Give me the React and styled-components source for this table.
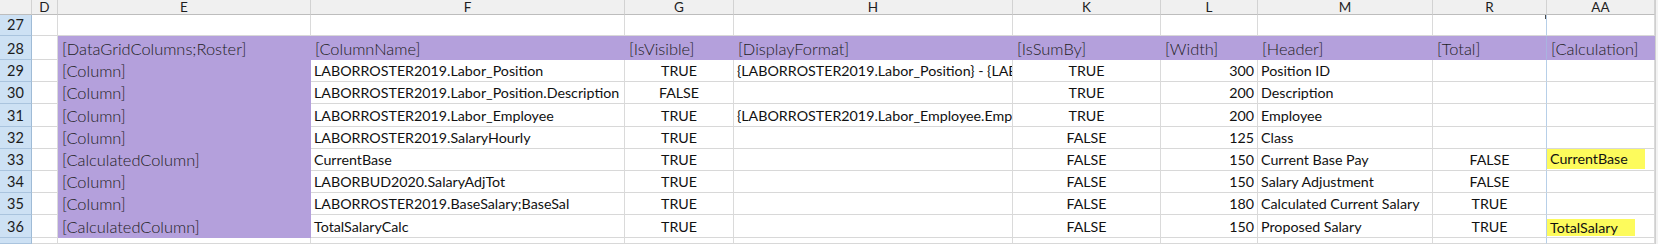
import React from 'react'
import styled, { createGlobalStyle } from 'styled-components'

const GlobalStyle = createGlobalStyle`
  html, body {
    margin: 0;
    padding: 0;
    background: #ffffff;
  }
  body {
    font-family: Lato, "Open Sans", sans-serif;
    overflow: hidden;
  }
`

const columns = [
  { key: 'D', w: 26 },
  { key: 'E', w: 253 },
  { key: 'F', w: 314 },
  { key: 'G', w: 109 },
  { key: 'H', w: 279 },
  { key: 'K', w: 148 },
  { key: 'L', w: 97 },
  { key: 'M', w: 175 },
  { key: 'R', w: 114 },
  { key: 'AA', w: 108 },
]

const header = {
  E: '[DataGridColumns;Roster]',
  F: '[ColumnName]',
  G: '[IsVisible]',
  H: '[DisplayFormat]',
  K: '[IsSumBy]',
  L: '[Width]',
  M: '[Header]',
  R: '[Total]',
  AA: '[Calculation]',
}

// H only shows what fits before column K, as in the sheet
const rows = [
  { n: 29, h: 22, E: '[Column]', F: 'LABORROSTER2019.Labor_Position', G: 'TRUE', H: '{LABORROSTER2019.Labor_Position} - {LAB', K: 'TRUE', L: '300', M: 'Position ID' },
  { n: 30, h: 22, E: '[Column]', F: 'LABORROSTER2019.Labor_Position.Description', G: 'FALSE', K: 'TRUE', L: '200', M: 'Description' },
  { n: 31, h: 23, E: '[Column]', F: 'LABORROSTER2019.Labor_Employee', G: 'TRUE', H: '{LABORROSTER2019.Labor_Employee.Emp', K: 'TRUE', L: '200', M: 'Employee' },
  { n: 32, h: 22, E: '[Column]', F: 'LABORROSTER2019.SalaryHourly', G: 'TRUE', K: 'FALSE', L: '125', M: 'Class' },
  { n: 33, h: 22, E: '[CalculatedColumn]', F: 'CurrentBase', G: 'TRUE', K: 'FALSE', L: '150', M: 'Current Base Pay', R: 'FALSE', AA: 'CurrentBase' },
  { n: 34, h: 22, E: '[Column]', F: 'LABORBUD2020.SalaryAdjTot', G: 'TRUE', K: 'FALSE', L: '150', M: 'Salary Adjustment', R: 'FALSE' },
  { n: 35, h: 22, E: '[Column]', F: 'LABORROSTER2019.BaseSalary;BaseSal', G: 'TRUE', K: 'FALSE', L: '180', M: 'Calculated Current Salary', R: 'TRUE' },
  { n: 36, h: 23, E: '[CalculatedColumn]', F: 'TotalSalaryCalc', G: 'TRUE', K: 'FALSE', L: '150', M: 'Proposed Salary', R: 'TRUE', AA: 'TotalSalary' },
]

const centered = ['G', 'K', 'R']

const Sheet = styled.div`
  display: grid;
  grid-template-columns: 32px ${columns.map(c => c.w + 'px').join(' ')} 1fr;
  grid-template-rows: 15px 21px 24px ${rows.map(r => r.h + 'px').join(' ')} 6px;
  width: 1658px;
  height: 244px;
  overflow: hidden;
`

const Cell = styled.div`
  box-sizing: border-box;
  position: relative;
  display: flex;
  align-items: flex-end;
  justify-content: ${p => (p.$align === 'center' ? 'center' : p.$align === 'right' ? 'flex-end' : 'flex-start')};
  padding: 0 3px 1px 3px;
  background: #ffffff;
  border-right: 1px solid ${p => (p.$sel ? '#b7cfe8' : '#dadada')};
  border-bottom: 1px solid #d8d8d8;
  font-size: 14.25px;
  color: #111111;
  white-space: nowrap;
  overflow: hidden;
  line-height: 18px;
`

const PurpleCell = styled(Cell)`
  background: #b4a0dc;
  border-right-color: ${p => (p.$sel ? '#a9b3e0' : '#b4a0dc')};
  border-bottom-color: #b4a0dc;
  font-size: 16.4px;
  font-weight: 300;
  color: #1e1e1e;
  padding-left: 4px;
  padding-bottom: 1px;
  line-height: 19px;
`

const ColHead = styled.div`
  box-sizing: border-box;
  display: flex;
  align-items: center;
  justify-content: center;
  background: #f0f0f0;
  border-right: 1px solid #d2d2d2;
  border-bottom: 1px solid #bdbdbd;
  font-size: 13.5px;
  color: #1e1e1e;
  line-height: 14px;
`

const RowHead = styled.div`
  box-sizing: border-box;
  display: flex;
  align-items: flex-end;
  justify-content: center;
  padding-bottom: 1px;
  background: #cde1f4;
  border-right: 1px solid #9fbbd6;
  border-bottom: 1px solid #aac4de;
  font-size: 14.5px;
  color: #1c1c1c;
  line-height: 18px;
`

const Filler = styled.div`
  background: #f3f3f3;
  border-left: 1px solid #cfcfcf;
`

const Highlight = styled.span`
  display: inline-block;
  background: #fdfb5c;
  padding: 0 17px 0 3px;
  margin-left: -3px;
  line-height: ${p => p.$h}px;
`

const Marker = styled.span`
  position: absolute;
  right: -3px;
  top: 0;
  width: 4px;
  height: 4px;
  background: #4a4a4a;
`

const App = () => {
  return (
    <>
      <GlobalStyle />
      <Sheet>
        <ColHead />
        {columns.map(c => (
          <ColHead key={c.key}>{c.key}</ColHead>
        ))}
        <Filler />

        <RowHead>27</RowHead>
        {columns.map(c => (
          <Cell key={c.key} $sel={c.key === 'R'}>
            {c.key === 'R' && <Marker />}
          </Cell>
        ))}
        <Filler />

        <RowHead>28</RowHead>
        {columns.map(c =>
          c.key === 'D' ? (
            <Cell key={c.key} />
          ) : (
            <PurpleCell key={c.key} $sel={c.key === 'R'}>
              {header[c.key]}
            </PurpleCell>
          )
        )}
        <Filler />

        {rows.map(r => (
          <React.Fragment key={r.n}>
            <RowHead>{r.n}</RowHead>
            {columns.map(c => {
              if (c.key === 'E') {
                return <PurpleCell key={c.key}>{r.E}</PurpleCell>
              }
              const align = centered.includes(c.key) ? 'center' : c.key === 'L' ? 'right' : 'left'
              const value = r[c.key]
              return (
                <Cell key={c.key} $align={align} $sel={c.key === 'R'}>
                  {c.key === 'AA' && value ? <Highlight $h={r.n === 33 ? 21 : 17}>{value}</Highlight> : value}
                </Cell>
              )
            })}
            <Filler />
          </React.Fragment>
        ))}

        <RowHead />
        {columns.map(c => (
          <Cell key={c.key} $sel={c.key === 'R'} />
        ))}
        <Filler />
      </Sheet>
    </>
  )
}

export default App
